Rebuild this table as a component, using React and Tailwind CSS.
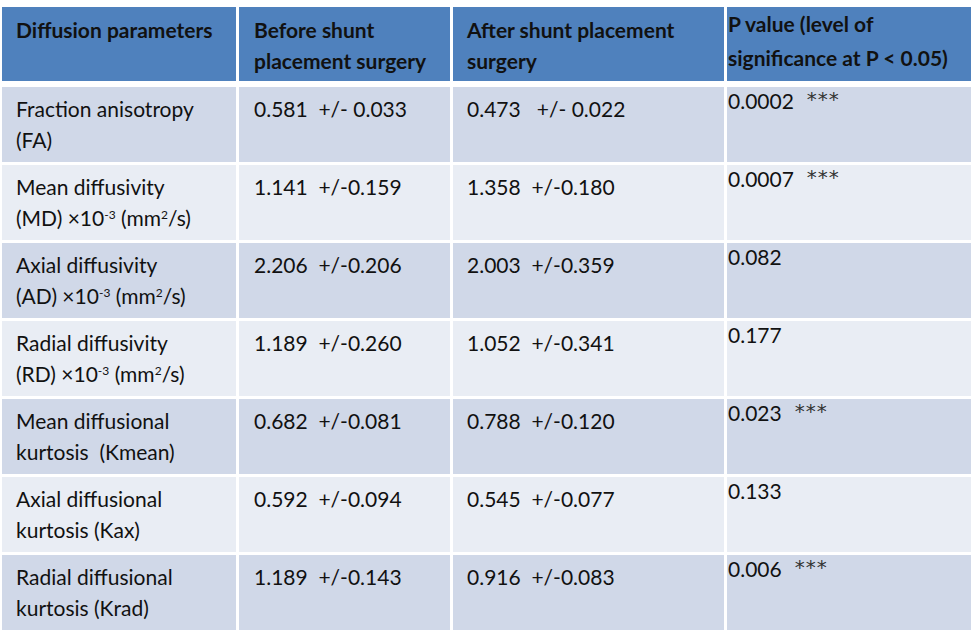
const rows = [
  {
    name: ["Fraction anisotropy", "(FA)"],
    before: "0.581  +/- 0.033",
    after: "0.473   +/- 0.022",
    p: "0.0002",
    sig: true,
  },
  {
    name: ["Mean diffusivity", "unit:MD"],
    before: "1.141  +/-0.159",
    after: "1.358  +/-0.180",
    p: "0.0007",
    sig: true,
  },
  {
    name: ["Axial diffusivity", "unit:AD"],
    before: "2.206  +/-0.206",
    after: "2.003  +/-0.359",
    p: "0.082",
  },
  {
    name: ["Radial diffusivity", "unit:RD"],
    before: "1.189  +/-0.260",
    after: "1.052  +/-0.341",
    p: "0.177",
  },
  {
    name: ["Mean diffusional", "kurtosis  (Kmean)"],
    before: "0.682  +/-0.081",
    after: "0.788  +/-0.120",
    p: "0.023",
    sig: true,
  },
  {
    name: ["Axial diffusional", "kurtosis (Kax)"],
    before: "0.592  +/-0.094",
    after: "0.545  +/-0.077",
    p: "0.133",
  },
  {
    name: ["Radial diffusional", "kurtosis (Krad)"],
    before: "1.189  +/-0.143",
    after: "0.916  +/-0.083",
    p: "0.006",
    sig: true,
  },
];

function NameLine({ text }) {
  if (text.startsWith("unit:")) {
    const abbr = text.slice(5);
    return (
      <div>
        ({abbr}) ×10<sup className="text-[12px] -top-[7px]">-3</sup> (mm
        <sup className="text-[12px] -top-[7px]">2</sup>/s)
      </div>
    );
  }
  return <div className="whitespace-pre">{text}</div>;
}

export default function App() {
  return (
    <div
      className="w-[972px] h-[636px] bg-white pl-[2px] pt-[7px] text-[21px] leading-[31px] text-[#111]"
      style={{ fontFamily: "Lato, 'Open Sans', sans-serif" }}
    >
      <div className="grid grid-cols-[234px_211px_271px_244px] gap-x-[3px] h-[74px] font-bold">
        <div className="bg-[#4f81bd] pl-[14px] pt-[7px]">Diffusion parameters</div>
        <div className="bg-[#4f81bd] pl-[15px] pt-[7px]">
          Before shunt
          <br />
          placement surgery
        </div>
        <div className="bg-[#4f81bd] pl-[14px] pt-[7px]">
          After shunt placement
          <br />
          surgery
        </div>
        <div className="bg-[#4f81bd] pl-[1px] pt-0 leading-[34px]">
          P value (level of
          <br />
          significance at P &lt; 0.05)
        </div>
      </div>
      <div className="flex flex-col gap-y-[3px] mt-[6px]">
        {rows.map((r, i) => {
          const bg = i % 2 === 0 ? "bg-[#d0d8e8]" : "bg-[#e9edf4]";
          return (
            <div
              key={i}
              className="grid grid-cols-[234px_211px_271px_244px] gap-x-[3px] h-[75px]"
            >
              <div className={`${bg} pl-[14px] pt-[6px]`}>
                {r.name.map((t, j) => (
                  <NameLine key={j} text={t} />
                ))}
              </div>
              <div className={`${bg} pl-[15px] pt-[6px] whitespace-pre`}>{r.before}</div>
              <div className={`${bg} pl-[14px] pt-[6px] whitespace-pre`}>{r.after}</div>
              <div className={`${bg} pl-[1px] leading-[27px] whitespace-pre`}>
                {r.p}
                {r.sig && (
                  <span
                    className="ml-[13px] text-[20px] tracking-[1px] relative -top-[3px] text-[#333]"
                    style={{ fontFamily: "'DejaVu Sans', sans-serif" }}
                  >
                    ***
                  </span>
                )}
              </div>
            </div>
          );
        })}
      </div>
    </div>
  );
}
